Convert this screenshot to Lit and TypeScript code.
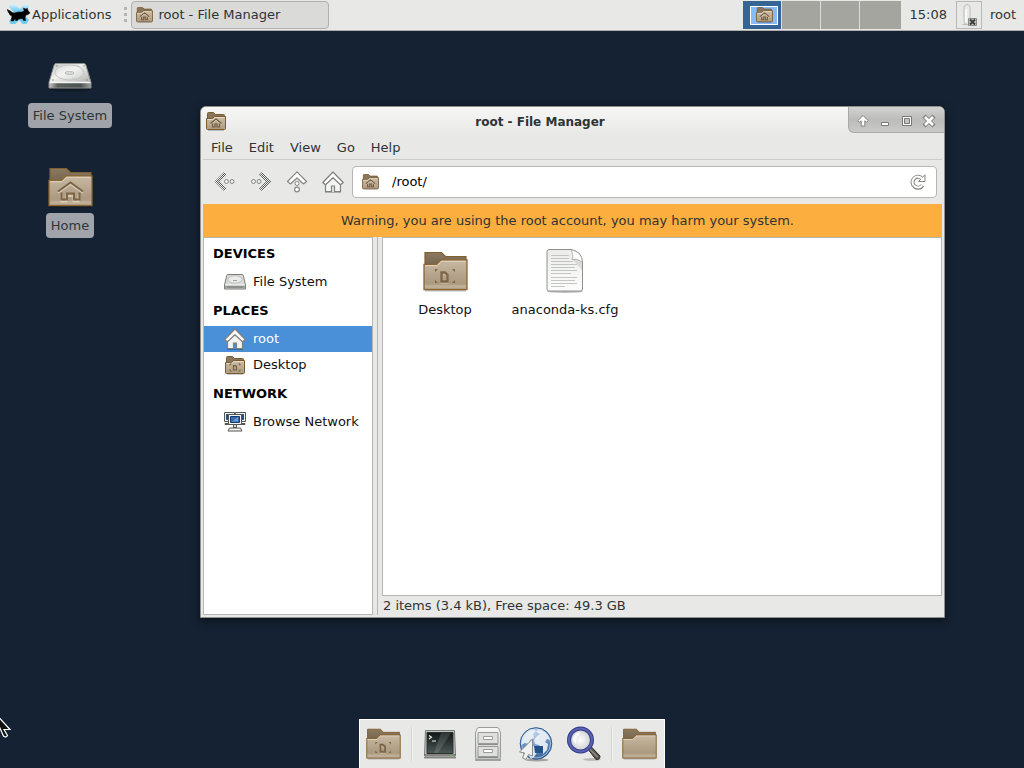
import { LitElement, html, css, svg, nothing, type TemplateResult } from "lit";
import { customElement, property } from "lit/decorators.js";

type FolderEmblem = "home" | "desktop" | "none";

/* ---------- icon drawings ---------- */

const emblems: Record<FolderEmblem, unknown> = {
  none: nothing,
  home: svg`
    <g fill="none" stroke="#e4d8c6" stroke-opacity=".7" stroke-width="2" transform="translate(0 1.4)">
      <path d="M10 24.5 22.500 15.500 35 24.500"/>
      <path d="M13.500 26v7h5v-5.500h7v5.500h5v-7"/>
    </g>
    <g fill="none" stroke="#7d6547" stroke-width="2">
      <path d="M10 24.500 22.500 15.500 35 24.500"/>
      <path d="M13.500 25.500v7h5.500v-6h7v6h5.500v-7"/>
    </g>`,
  desktop: svg`
    <g fill="none" stroke="#e4d8c6" stroke-opacity=".6" stroke-width="2" transform="translate(0 1.200)">
      <path d="M18.500 21.500h3.500l2.500 2.500v6.500h-6z"/>
    </g>
    <g fill="none" stroke="#7d6547" stroke-width="2.400">
      <path d="M18.500 21.500h3.500l2.500 2.500v6.500h-6z"/>
    </g>
    <path fill="#7d6547" d="M12 18h3l-3 3zM32 18h-3l3 3zM12 32h3l-3-3zM32 32h-3l3-3z"/>`,
};

const folder = (emblem: FolderEmblem) => svg`
  <svg viewBox="0 0 45 41" aria-hidden="true">
    <defs>
      <linearGradient id="fback" x1="0" y1="0" x2="0" y2="1">
        <stop offset="0" stop-color="#8b795f"/><stop offset=".4" stop-color="#75654d"/>
      </linearGradient>
      <linearGradient id="ffront" x1="0" y1="0" x2="0" y2="1">
        <stop offset="0" stop-color="#c9b9a2"/><stop offset=".75" stop-color="#ab9a80"/><stop offset="1" stop-color="#b5a58c"/>
      </linearGradient>
    </defs>
    <path d="M2 39.500h41" stroke="#000" stroke-opacity=".25" stroke-width="2"/>
    <path d="M2 37V1.500h16.500l4 4h20.500V30z" fill="url(#fback)" stroke="#80602f" stroke-width="1.200"/>
    <path d="M1 13.500h12.500l4.500-4.500h26v29.500H1z" fill="url(#ffront)" stroke="#8a6633" stroke-width="1.300"/>
    <path d="M2 14.700h12l4.500-4.500h24.300" fill="none" stroke="#e3d7c5"/>
    <path d="M2 34h41v3.500H2z" fill="#c4b49c" fill-opacity=".7"/>
    ${emblems[emblem]}
  </svg>`;

const smallEmblems: Record<FolderEmblem, unknown> = {
  none: nothing,
  home: svg`
    <g fill="none" stroke="#e9dfd0" stroke-opacity=".8" transform="translate(0 1)"><path d="m4.500 11.500 5.500-4.500 5.500 4.500"/></g>
    <path d="m4.500 11.500 5.500-4.500 5.500 4.500M6.500 11.500v3.500h2.500v-3h2v3h2.500v-3.500" fill="none" stroke="#735b3e" stroke-width="1.200"/>`,
  desktop: svg`
    <path d="M8.500 9.500h2l1 1v3.500h-3z" fill="none" stroke="#735b3e" stroke-width="1.200"/>
    <path d="M5 9.500V8h1.500M15 9.500V8h-1.500M5 13.500V15h1.500M15 13.500V15h-1.500" fill="none" stroke="#735b3e"/>`,
};

const smallFolder = (emblem: FolderEmblem) => svg`
  <svg viewBox="0 0 20 19" aria-hidden="true">
    <defs><linearGradient id="sfront" x1="0" y1="0" x2="0" y2="1">
      <stop offset="0" stop-color="#cbbca5"/><stop offset="1" stop-color="#ad9c82"/>
    </linearGradient></defs>
    <path d="M1.500 8V1.500q0-1 1-1h5l2 2h8q1 0 1 1V8z" fill="#8a775b" stroke="#7a5c33"/>
    <path d="M.5 6.500h6l2-2h11v12q0 1-1 1h-17q-1 0-1-1z" fill="url(#sfront)" stroke="#7a5c33"/>
    <path d="M1.500 7.500h5.500l2-2h9.500" fill="none" stroke="#e6dbca"/>
    <path d="M2 18.500h16" stroke="#000" stroke-opacity=".2"/>
    ${smallEmblems[emblem]}
  </svg>`;

const drive = svg`
  <svg viewBox="0 0 44 30" aria-hidden="true">
    <defs>
      <linearGradient id="dtop" x1="0" y1="0" x2="1" y2="1">
        <stop offset="0" stop-color="#c4c5c3"/><stop offset=".45" stop-color="#f0f0ef"/><stop offset="1" stop-color="#aeb0ad"/>
      </linearGradient>
      <linearGradient id="dface" x1="0" y1="0" x2="1" y2="0">
        <stop offset="0" stop-color="#c9cac8"/><stop offset=".2" stop-color="#5c615f"/><stop offset=".75" stop-color="#4a5351"/><stop offset="1" stop-color="#a0a3a0"/>
      </linearGradient>
    </defs>
    <ellipse cx="22" cy="27.500" rx="21" ry="2" fill="#000" fill-opacity=".25"/>
    <path d="M8 1.500h28q1.500 0 2 2l5 17H1l5-17q.5-2 2-2z" fill="url(#dtop)" stroke="#8b8e8a"/>
    <path d="M1 20.500h42v5.500H1z" fill="url(#dface)" stroke="#8b8e8a"/>
    <path d="M1.500 20.500h41" stroke="#fff" stroke-opacity=".9" stroke-width="1.500"/>
    <ellipse cx="21.500" cy="10.500" rx="14.500" ry="7.500" fill="#fff" fill-opacity=".2" stroke="#c4c6c3"/>
    <ellipse cx="21.500" cy="11" rx="4.500" ry="1.500" fill="#dcdddb" stroke="#b9bbb8"/>
    <path d="M29 3.500q8 3 6 11M24 17q7 0 10-3" fill="none" stroke="#c9cbc8"/>
    <circle cx="9" cy="4" r=".8" fill="#888"/><circle cx="36" cy="4" r=".8" fill="#888"/><circle cx="5" cy="18" r=".8" fill="#888"/><circle cx="39" cy="18" r=".8" fill="#888"/>
  </svg>`;

const smallDrive = svg`
  <svg viewBox="0 0 22 16" aria-hidden="true">
    <path d="M4 .500h14q1 0 1.300 1l2.200 9.500v4H.5v-4L2.700 1.500q.3-1 1.300-1z" fill="#d9dad8" stroke="#7b7e79"/>
    <path d="M1 11h20v3.500H1z" fill="#a0a39f"/>
    <path d="M1 11h20" stroke="#fff"/>
    <path d="M3 13h16" stroke="#6e716d" stroke-opacity=".7"/>
    <ellipse cx="11" cy="5.500" rx="7" ry="3.700" fill="#ebebea" stroke="#c0c2bf"/>
    <path d="M9 6.500h4" stroke="#a2a4a1"/>
  </svg>`;

const textFile = svg`
  <svg viewBox="0 0 38 44" aria-hidden="true">
    <defs>
      <linearGradient id="paper" x1="0" y1="0" x2="0" y2="1">
        <stop offset="0" stop-color="#ececeb"/><stop offset="1" stop-color="#fdfdfd"/>
      </linearGradient>
    </defs>
    <ellipse cx="19" cy="42.500" rx="18" ry="1.500" fill="#000" fill-opacity=".25"/>
    <path d="M3 .500h22q11 2 11.500 12.500V40q0 2-2 2H3q-2 0-2-2V2.500q0-2 2-2z" fill="url(#paper)" stroke="#8e908d"/>
    <path d="M25 .700q3 6 1 9.800 5-1.500 10.300 2.500Q36 3 25 .700z" fill="#fff" stroke="#a3a5a2" stroke-width=".8"/>
    <path d="M27 11q5-1 9 3v7z" fill="#000" fill-opacity=".1"/>
    <path stroke="#bdbfbc" d="M5 6.500h18M5 9.500h18M5 12.500h22M5 15.500h26M5 18.500h24M5 21.500h26M5 24.500h20M5 28.500h26M5 31.500h24M5 34.500h26M5 37.500h14" stroke-width=".9"/>
  </svg>`;

const house = (size: number) => svg`
  <svg width=${size} height=${size} viewBox="0 0 22 22" aria-hidden="true">
    <path d="M3.500 12v8.500h6v-5.500h3v5.500h6V12L11 5.500z" fill="#f4f4f3" stroke="#7f817d" stroke-width="1.200"/>
    <path d="M11 1 .800 11.500l2.700 2.200L11 6.800l7.500 6.900 2.700-2.200z" fill="#fff" stroke="#7f817d" stroke-width="1.200" stroke-linejoin="round"/>
    <path d="M3 21.500h16" stroke="#000" stroke-opacity=".25"/>
  </svg>`;

const network = svg`
  <svg width="22" height="20" viewBox="0 0 22 20" aria-hidden="true">
    <g stroke="#555753">
      <path d="M.5.500h10v9H.5zM11.500.500h10v9h-10z" fill="#eeeeec"/>
      <path d="M2.500 2.500h6v5h-6zM13.500 2.500h6v5h-6z" fill="#204a87" stroke="#2d4f80"/>
      <path d="M1 11.500h5v1H1zM16 11.500h5v1h-5z" fill="#fff"/>
      <path d="M4.500 2.500h13v10h-13z" fill="#f4f4f2"/>
      <path d="M6.500 4.500h9v6h-9z" fill="#3769ad" stroke="#163a70"/>
      <path d="M9.500 12.500h3v3h-3z" fill="#d3d7cf"/>
      <path d="M5.500 16h11l1.500 3H4z" fill="#f4f4f2"/>
    </g>
    <path d="M8 9.500 14 5v4.500z" fill="#6b9ad6"/>
  </svg>`;

const dither = svg`
  <defs><pattern id="dither" width="2" height="2" patternUnits="userSpaceOnUse">
    <path d="M0 0h1v1H0zM1 1h1v1H1z" fill="#5c5e5a"/><path d="M1 0h1v1H1zM0 1h1v1H0z" fill="#eeeeec"/>
  </pattern></defs>`;

const arrowBack = svg`
  <svg width="22" height="22" viewBox="0 0 22 22" aria-hidden="true">${dither}
    <path d="M10 1 .500 10.500 10 20l3-2.500-7-7 7-7z" fill="url(#dither)"/>
    <circle cx="12.500" cy="10.500" r="2" fill="#eee" stroke="#858783"/>
    <circle cx="18" cy="10.500" r="2" fill="#eee" stroke="#858783"/>
  </svg>`;

const arrowForward = svg`
  <svg width="22" height="22" viewBox="0 0 22 22" aria-hidden="true">${dither}
    <path d="m12 1 9.500 9.500L12 20l-3-2.500 7-7-7-7z" fill="url(#dither)"/>
    <circle cx="9" cy="10.500" r="2" fill="#eee" stroke="#858783"/>
    <circle cx="3.500" cy="10.500" r="2" fill="#eee" stroke="#858783"/>
  </svg>`;

const arrowUp = svg`
  <svg width="22" height="22" viewBox="0 0 22 22" aria-hidden="true">
    <path d="M11 .800 1.500 10.500l3 2.500L11 7l6.500 6 3-2.500z" fill="#fff" stroke="#858783" stroke-width="1.200" stroke-linejoin="round"/>
    <circle cx="11" cy="12.500" r="2" fill="#fff" stroke="#858783"/>
    <circle cx="11" cy="18.500" r="2.400" fill="#fff" stroke="#858783" stroke-width="1.200"/>
  </svg>`;

const reload = svg`
  <svg width="16" height="16" viewBox="0 0 16 16" aria-hidden="true">
    <path d="M12.500 11.500A5.500 5.500 0 1 1 11.500 4" fill="none" stroke="#858783" stroke-width="4"/>
    <path d="M8.500 7.500h6.500V.800l-2 2z" fill="#fff" stroke="#858783"/>
    <path d="M12.200 11.300A5.400 5.400 0 1 1 12 4.500" fill="none" stroke="#fff" stroke-width="2"/>
  </svg>`;

const mouseLogo = svg`
  <svg width="24" height="22" viewBox="0 0 24 22" aria-hidden="true">
    <defs><linearGradient id="xblue" x1="0" y1="0" x2="0" y2="1">
      <stop offset="0" stop-color="#d4f0fb"/><stop offset=".4" stop-color="#5cc0ea"/><stop offset="1" stop-color="#74cdf2"/>
    </linearGradient></defs>
    <path d="M3 1.500h5.500l4 4.500 4-4.500H22v2.500l-5.500 7 5.500 6-2.500 4h-4L12 17l-3.500 4h-5L2 18l6.500-7L2 4z" fill="url(#xblue)"/>
    <path d="M0 6.500 3.500 8l1.500 1.500 2.500.500q4-1.500 8-1l1.500-1.500-.5-2.500 2 1 2-.500.500 2 2 2.500-2 1.500-2 .500-1 2.500.500 3h-2l-1-2-4 .500-1 1.500h-2l.500-1.500-1.500.500-1 1.500H4l.500-2.500.500-2.500-2-1z" fill="#000" stroke="#000" stroke-width=".5"/>
  </svg>`;

const terminal = svg`
  <svg width="34" height="34" viewBox="0 0 34 34" aria-hidden="true">
    <defs><linearGradient id="tscreen" x1="0" y1="0" x2="0" y2="1">
      <stop offset="0" stop-color="#111716"/><stop offset="1" stop-color="#4c5856"/>
    </linearGradient></defs>
    <path d="M1 30h32v1.500H1z" fill="#000" fill-opacity=".4"/>
    <path d="M2.500 3.500h29l1 25q0 1.500-2 1.500h-27q-2 0-2-1.500z" fill="#c3c5c1" stroke="#777a76"/>
    <path d="M4 5.500h26v21H4z" fill="url(#tscreen)" stroke="#2b2f2e"/>
    <path d="M22 6h6L15 26h-4l7-20z" fill="#fff" fill-opacity=".13"/>
    <path d="M1.500 28h31" stroke="#444"/><path d="M27 28.500h3" stroke="#5cb14a"/>
    <path d="m6 8.500 2.500 1.800L6 12M9 14h4" fill="none" stroke="#e8f0ee" stroke-width="1.200"/>
  </svg>`;

const cabinet = svg`
  <svg width="28" height="36" viewBox="0 0 28 36" aria-hidden="true">
    <defs><linearGradient id="cab" x1="0" y1="0" x2="0" y2="1">
      <stop offset="0" stop-color="#f8f8f7"/><stop offset="1" stop-color="#c6c8c4"/>
    </linearGradient></defs>
    <path d="M1 34h26" stroke="#000" stroke-opacity=".3" stroke-width="2"/>
    <path d="M5 1.500h18q2 0 2.500 2.500l1 3v24.500q0 2-2 2h-21q-2 0-2-2V7l1-3Q3 1.500 5 1.500z" fill="url(#cab)" stroke="#9a9c98"/>
    <path d="M4 6.500h20v11H4zM4 20.500h20v10H4z" fill="#dfe0dd" stroke="#9a9c98"/>
    <path d="M4 18.500h20M4 31.500h20" stroke="#555" stroke-opacity=".6"/>
    <path d="M9.500 10.500h9v3h-9zM9.500 23.500h9v3h-9z" fill="#fff" stroke="#9a9c98"/>
  </svg>`;

const globe = svg`
  <svg width="36" height="36" viewBox="0 0 36 36" aria-hidden="true">
    <defs><radialGradient id="sea" cx=".45" cy=".2" r=".85">
      <stop offset="0" stop-color="#b9d0ea"/><stop offset=".5" stop-color="#6d97c8"/><stop offset="1" stop-color="#2c5992"/>
    </radialGradient></defs>
    <ellipse cx="19" cy="34" rx="12" ry="1.500" fill="#000" fill-opacity=".3"/>
    <circle cx="18" cy="17.500" r="15.800" fill="url(#sea)" stroke="#31598c"/>
    <path d="M5 10q4-6 10-7l3 2-3 3 1 4-4 2-1 4-4-1-4 2q0-5 2-9zM20 3q6 1 10 6l2 5-3-1-2 3 3 2-1 6-4 4-1-5-3-4-4-1-1-4 3-4 3-2-4-2zM12 19l6 2 2 4-4 6-3 2-3-5z" fill="#eef2f5" fill-opacity=".9"/>
    <circle cx="18" cy="17.500" r="14.500" fill="none" stroke="#cfe0f3" stroke-opacity=".7"/>
    <path d="M16 20h9v7h-8z" fill="#235289"/>
    <path d="M14.500 13v17l-4-1.500-2.500 5-3.500-1.500 2-5L1.500 26z" fill="#f0f1ef" stroke="#8a8c88"/>
  </svg>`;

const magnifier = svg`
  <svg width="36" height="36" viewBox="0 0 36 36" aria-hidden="true">
    <defs><radialGradient id="lens"><stop offset="0" stop-color="#fff"/><stop offset="1" stop-color="#c9ccca"/></radialGradient></defs>
    <ellipse cx="26" cy="33.500" rx="9" ry="1.500" fill="#000" fill-opacity=".2"/>
    <path d="m21 22 3-2.500L34 30q0 4-4 3.500z" fill="#59554e" stroke="#2e2c29"/>
    <path d="m23.500 23 8 8" stroke="#938d83" stroke-width="1.500"/>
    <circle cx="14.500" cy="14" r="11.500" fill="url(#lens)" stroke="#343b85" stroke-width="4"/>
    <circle cx="14.500" cy="14" r="11.500" fill="none" stroke="#5a62b8" stroke-width="2"/>
    <path d="M7 12q2-6 8-6l-4 5-1 7q-3-2-3-6z" fill="#fff" fill-opacity=".8"/>
  </svg>`;

const trayPlug = svg`
  <svg width="18" height="24" viewBox="0 0 18 24" aria-hidden="true">
    <rect x="4" y="1.500" width="6" height="20" rx="3" fill="#e9e9e7" stroke="#bcbebb"/>
    <path d="M6 6v13" stroke="#fff" stroke-width="1.500"/>
    <path d="M2.500 21.500h8" stroke="#bbb"/>
    <path d="M8.500 15.500h8v7h-8z" fill="#c4c5c2" stroke="#888a85"/>
    <path d="m10 16.500 5 5m0-5-5 5" stroke="#3c3e3b" stroke-width="2"/>
  </svg>`;

const pointer = svg`
  <svg width="12" height="20" viewBox="0 0 12 20" aria-hidden="true">
    <path d="M-6-6v18l5-4 4.500 10q2.500 2 4-.500L4 11.500h6z" fill="#111" stroke="#fff" stroke-width="1.200"/>
  </svg>`;

const windowIcons: Array<[string, TemplateResult]> = [
  ["Shade", svg`<svg width="14" height="14" viewBox="0 0 14 14"><path d="M7 1.500 1.800 6.700l1.400 1.600 2-1.500v5.200h3.600V6.800l2 1.500 1.400-1.600z" fill="#fff" stroke="#858783"/></svg>` as unknown as TemplateResult],
  ["Minimize", svg`<svg width="14" height="14" viewBox="0 0 14 14"><path d="M3.500 8.500h7v3h-7z" fill="#fff" stroke="#777"/></svg>` as unknown as TemplateResult],
  ["Maximize", svg`<svg width="14" height="14" viewBox="0 0 14 14"><path d="M2.500 2.500h9v9h-9z" fill="#fff" stroke="#777"/><path d="M4.500 4.500h5v5h-5z" fill="#c4c4c2" stroke="#777"/></svg>` as unknown as TemplateResult],
  ["Close", svg`<svg width="14" height="14" viewBox="0 0 14 14"><path d="m2 2 10 10m0-10-10 10" stroke="#858783" stroke-width="4.500"/><path d="m3 3 8 8m0-8-8 8" stroke="#fff" stroke-width="2.500"/></svg>` as unknown as TemplateResult],
];

const reset = css`
  * { box-sizing: border-box; }
  button, input, a, h1, h2, ul { margin: 0; padding: 0; border: 0; background: none; color: inherit; font: inherit; text-decoration: none; list-style: none; }
  svg { display: block; flex: none; }
`;

/* ---------- top panel ---------- */

@customElement("top-panel")
class TopPanel extends LitElement {
  @property() clock = "15:08";

  static styles = [reset, css`
    :host { display: flex; height: 31px; background: #e8e8e6; border-bottom: 1px solid #aeaeac; padding-right: 8px; color: #2e3436; }
    .apps { display: flex; align-items: center; gap: 1px; padding: 0 8px 2px 7px; }
    .grip { width: 3px; margin: 7px 4px 7px 5px; background: repeating-linear-gradient(#b4b4b2 0 3px, transparent 3px 6px); }
    .task { display: flex; align-items: center; gap: 5px; width: 198px; height: 28px; margin-top: 1px; padding: 0 4px 1px; border: 1px solid #b0b0ae; border-radius: 4px; background: #dadad8; }
    .task svg { width: 17px; height: 16px; margin-top: 1px; }
    .spaces { display: flex; gap: 1px; margin: 1px 0 1px auto; background: #dcdcda; }
    .space { width: 38px; background: #a5a5a0; }
    .space:last-child { width: 41px; }
    .active { display: grid; place-items: center; background: #356594; padding-left: 4px; }
    .mini { display: grid; place-items: center; width: 28px; height: 19px; border: 1px solid #fff; background: #86bbf8; }
    .mini svg { width: 17px; height: 16px; }
    .clock { align-self: center; margin: 0 9px 0 8px; padding-bottom: 2px; }
    .tray { display: grid; place-items: center; width: 26px; height: 28px; margin-top: 1px; border: 1px solid #b8b8b6; }
    .user { margin-left: 8px; padding-bottom: 2px; }
  `];

  render() {
    return html`
      <button class="apps">${mouseLogo}<span>Applications</span></button>
      <span class="grip"></span>
      <button class="task">${smallFolder("home")}<span>root - File Manager</span></button>
      <nav class="spaces" aria-label="Workspaces">
        <button class="space active" aria-label="Workspace 1"><span class="mini">${smallFolder("home")}</span></button>
        ${[2, 3, 4].map((n) => html`<button class="space" aria-label="Workspace ${n}"></button>`)}
      </nav>
      <time class="clock">${this.clock}</time>
      <button class="tray" aria-label="Network">${trayPlug}</button>
      <button class="user">root</button>
    `;
  }
}

/* ---------- file manager window ---------- */

@customElement("file-window")
class FileWindow extends LitElement {
  @property() path = "/root/";

  static styles = [reset, css`
    :host { display: flex; flex-direction: column; background: #e8e8e6; border: 1px solid #8f8f8c; border-radius: 6px 6px 0 0; padding: 0 2px 2px; overflow: hidden; color: #2e3436; box-shadow: 0 3px 8px rgba(0, 0, 0, .5); }
    .title { display: grid; grid-template-columns: 31px 1fr 96px; align-items: center; height: 29px; margin: 0 -2px; background: linear-gradient(#f6f6f5, #e8e8e6); }
    .title > svg { width: 20px; height: 19px; margin-left: 5px; }
    .title h1 { padding-top: 1px; font-size: 12px; font-weight: bold; text-align: center; }
    .controls { align-self: start; display: flex; align-items: center; height: 26px; padding-left: 3px; border: 1px solid #a9a9a7; border-width: 0 0 1px 1px; border-bottom-left-radius: 6px; background: linear-gradient(#d2d2d0, #bcbcba 50%, #c9c9c7); }
    .controls button { display: grid; place-items: center; width: 22px; height: 26px; padding-top: 2px; }
    .menu { display: flex; height: 24px; border-bottom: 1px solid #cbcbc9; }
    .menu button { padding: 0 8px 1px; }
    .tools { display: flex; padding: 6px 5px 6px 4px; }
    .tools > button { display: grid; place-items: center; width: 36px; height: 32px; }
    .path { flex: 1; display: flex; align-items: center; gap: 13px; height: 32px; margin-left: 1px; padding: 0 10px 0 9px; border: 1px solid #b6b6b4; border-radius: 4px; background: #fff; color: #000; }
    .path > svg { width: 17px; height: 16px; }
    .path input { flex: 1; min-width: 0; outline: 0; padding-bottom: 2px; }
    .warning { padding: 8px 10px 8px 0; line-height: 17px; text-align: center; background: #fcaf3e; }
    .panes { flex: 1; min-height: 0; display: flex; }
    .side { width: 170px; border: 1px solid #b6b6b4; background: #fff; color: #111; }
    .side h2 { height: 31px; padding: 7px 9px; line-height: 17px; font-weight: bold; color: #000; }
    .side a { display: grid; grid-template-columns: 22px 1fr; gap: 7px; align-items: center; height: 26px; padding: 0 0 2px 20px; white-space: nowrap; }
    .side a > svg { justify-self: center; margin-top: 2px; }
    .side .folder svg { width: 20px; height: 19px; }
    .side .drive svg { width: 22px; height: 16px; }
    .side .selected { background: #4a90d9; color: #fff; }
    .split { width: 9px; border: 4px solid #e8e8e6; border-width: 0 4px; background: #b6b6b4; }
    .main { flex: 1; min-width: 0; display: flex; flex-direction: column; }
    .files { flex: 1; display: flex; flex-wrap: wrap; align-content: flex-start; padding: 9px 2px; border: 1px solid #b6b6b4; background: #fff; color: #111; }
    .file { display: flex; flex-direction: column; align-items: center; gap: 6px; width: 120px; line-height: 17px; }
    .icon { display: grid; place-items: center; height: 48px; }
    .icon svg { width: 45px; height: 41px; }
    .page svg { width: 38px; height: 44px; }
    .status { height: 19px; line-height: 19px; padding-left: 1px; }
  `];

  render() {
    return html`
      <header class="title">
        ${smallFolder("home")}
        <h1>root - File Manager</h1>
        <div class="controls">${windowIcons.map(([name, icon]) => html`<button aria-label=${name}>${icon}</button>`)}</div>
      </header>
      <nav class="menu">${["File", "Edit", "View", "Go", "Help"].map((m) => html`<button>${m}</button>`)}</nav>
      <div class="tools">
        <button aria-label="Back" disabled>${arrowBack}</button>
        <button aria-label="Forward" disabled>${arrowForward}</button>
        <button aria-label="Open parent">${arrowUp}</button>
        <button aria-label="Home">${house(22)}</button>
        <div class="path">
          ${smallFolder("home")}
          <input aria-label="Location" .value=${this.path} />
          <button aria-label="Reload">${reload}</button>
        </div>
      </div>
      <div class="warning" role="alert">Warning, you are using the root account, you may harm your system.</div>
      <div class="panes">
        <nav class="side">
          <h2>DEVICES</h2>
          <a class="drive" href="#fs">${smallDrive}<span>File System</span></a>
          <h2>PLACES</h2>
          <a class="selected" href="#root">${house(22)}<span>root</span></a>
          <a class="folder" href="#desktop">${smallFolder("desktop")}<span>Desktop</span></a>
          <h2>NETWORK</h2>
          <a href="#network">${network}<span>Browse Network</span></a>
        </nav>
        <div class="split"></div>
        <main class="main">
          <div class="files">
            <a class="file" href="#desktop"><span class="icon">${folder("desktop")}</span><span>Desktop</span></a>
            <a class="file" href="#anaconda"><span class="icon page">${textFile}</span><span>anaconda-ks.cfg</span></a>
          </div>
          <div class="status">2 items (3.4 kB), Free space: 49.3 GB</div>
        </main>
      </div>
    `;
  }
}

/* ---------- launcher dock ---------- */

@customElement("launcher-dock")
class LauncherDock extends LitElement {
  static styles = [reset, css`
    :host { display: flex; height: 49px; background: #e8e8e6; border: 1px solid #fff; border-bottom: 0; }
    button { display: grid; place-items: center; width: 48px; height: 48px; padding-right: 1px; }
    .folder svg { width: 35px; height: 32px; margin-bottom: 1px; }
    .rule { width: 2px; margin: 7px 3px; background: #d2d2d0; border-right: 1px solid #f4f4f3; }
  `];

  render() {
    return html`
      <button class="folder" aria-label="Desktop">${folder("desktop")}</button>
      <span class="rule"></span>
      <button aria-label="Terminal">${terminal}</button>
      <button aria-label="File Manager">${cabinet}</button>
      <button aria-label="Web Browser">${globe}</button>
      <button aria-label="Application Finder">${magnifier}</button>
      <span class="rule"></span>
      <button class="folder" aria-label="Home folder">${folder("none")}</button>
    `;
  }
}

@customElement("app-root")
class AppRoot extends LitElement {
  static styles = [reset, css`
    :host { display: flex; flex-direction: column; position: relative; height: 100vh; overflow: hidden; background: #152233; font: 13px/17px "DejaVu Sans", sans-serif; }
    .icons { flex: 1; display: flex; flex-direction: column; align-items: flex-start; gap: 17px; padding: 22px 10px; }
    .shortcut { display: flex; flex-direction: column; align-items: center; width: 120px; height: 93px; gap: 2px; color: #2e3436; }
    .picture { display: grid; place-items: center; height: 48px; }
    .drive svg { width: 44px; height: 30px; }
    .folder svg { width: 45px; height: 41px; }
    .label { padding: 4px 5px; border-radius: 4px; background: #a0a4aa; }
    file-window { position: absolute; top: 106px; left: 200px; right: 79px; bottom: 150px; }
    launcher-dock { align-self: center; }
    .pointer { position: absolute; left: 0; top: 718px; }
  `];

  render() {
    return html`
      <top-panel></top-panel>
      <section class="icons">
        <a class="shortcut" href="#fs"><span class="picture drive">${drive}</span><span class="label">File System</span></a>
        <a class="shortcut" href="#home"><span class="picture folder">${folder("home")}</span><span class="label">Home</span></a>
      </section>
      <file-window></file-window>
      <launcher-dock></launcher-dock>
      <div class="pointer">${pointer}</div>
    `;
  }
}
